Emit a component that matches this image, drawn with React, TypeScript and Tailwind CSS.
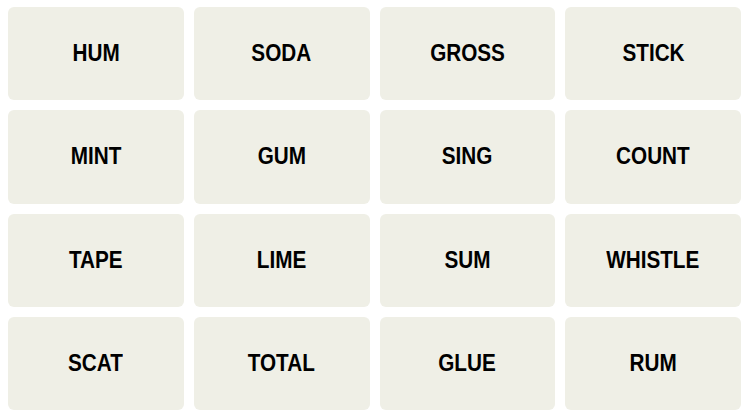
const words = [
  'HUM', 'SODA', 'GROSS', 'STICK',
  'MINT', 'GUM', 'SING', 'COUNT',
  'TAPE', 'LIME', 'SUM', 'WHISTLE',
  'SCAT', 'TOTAL', 'GLUE', 'RUM',
]

export default function App() {
  return (
    <div className="w-[750px] h-[418px] bg-white pl-[8px] pr-[9px] pt-[7px] pb-[8px]">
      <div className="grid h-full grid-cols-4 grid-rows-4 gap-[10px]">
        {words.map((w) => (
          <div
            key={w}
            className="flex items-center justify-center rounded-md bg-[#efefe6] text-black"
          >
            {/* narrowed Arial stands in for the condensed Franklin face */}
            <span
              className="scale-x-90 text-[23px] font-bold leading-none"
              style={{ fontFamily: '"Liberation Sans", Arial, sans-serif' }}
            >
              {w}
            </span>
          </div>
        ))}
      </div>
    </div>
  )
}
